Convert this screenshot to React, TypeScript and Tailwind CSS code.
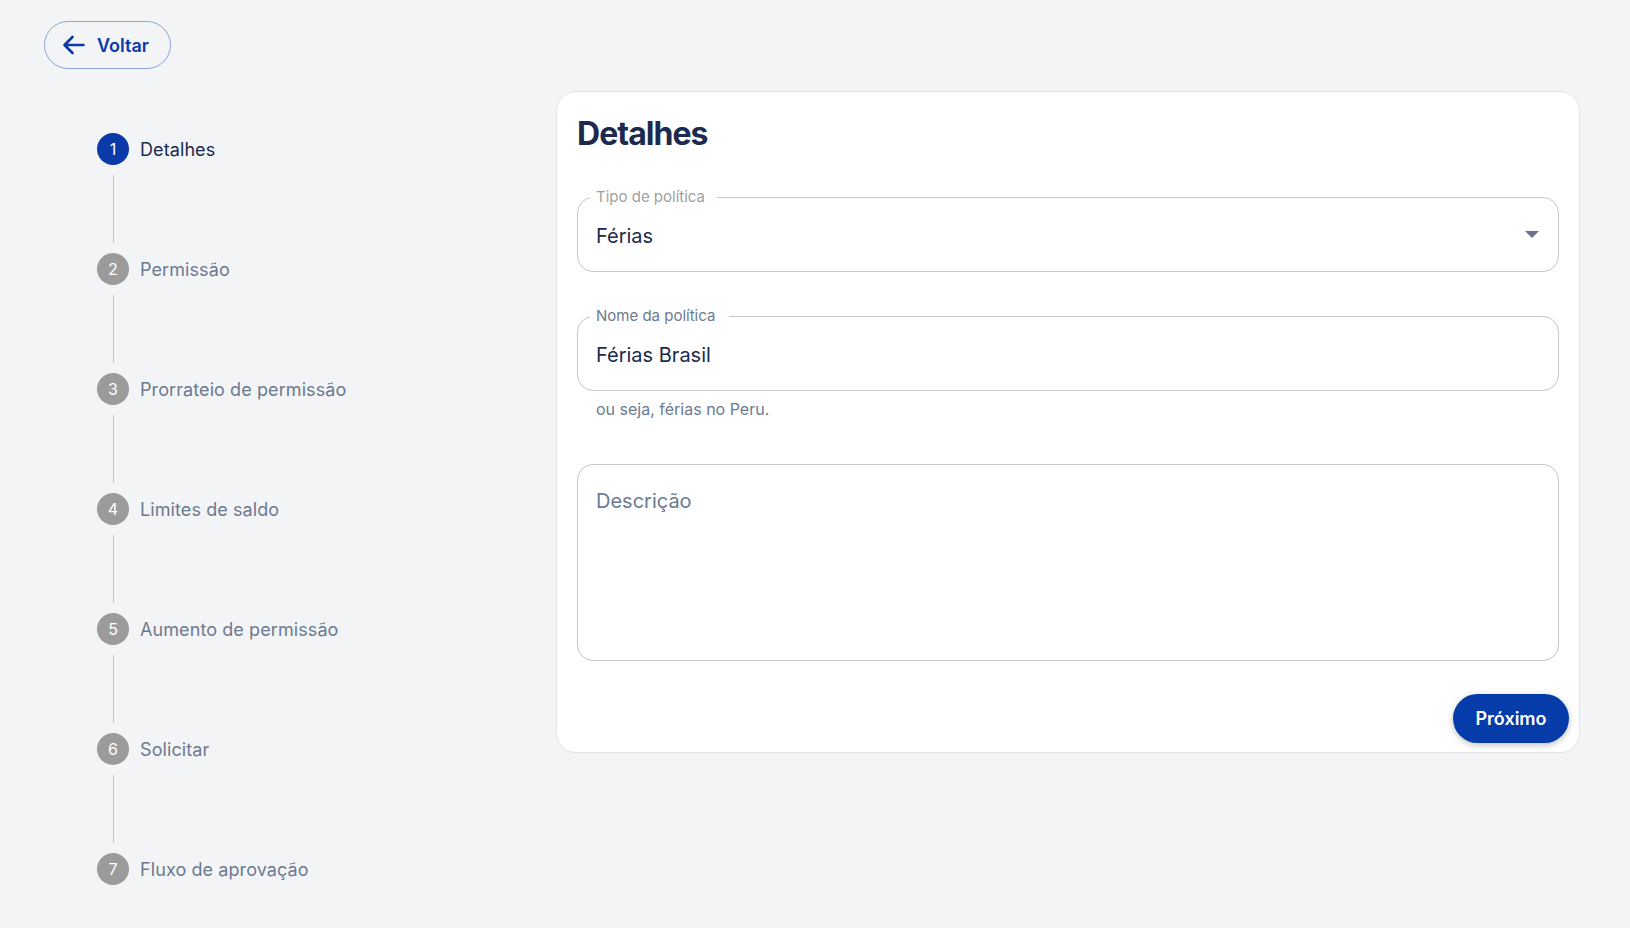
const steps = [
  "Detalhes",
  "Permissão",
  "Prorrateio de permissão",
  "Limites de saldo",
  "Aumento de permissão",
  "Solicitar",
  "Fluxo de aprovação",
];

function Stepper() {
  return (
    <div className="flex flex-col pl-[53px] pt-[42px]">
      {steps.map((label, i) => {
        const active = i === 0;
        return (
          <div key={label} className="flex flex-col">
            <div className="flex items-center gap-[11px]">
              <div
                className={
                  active
                    ? "w-8 h-8 rounded-full bg-[#0a3aa8] text-white text-[16px] flex items-center justify-center"
                    : "w-8 h-8 rounded-full bg-[#9b9b9b] text-white text-[16px] flex items-center justify-center"
                }
              >
                {i + 1}
              </div>
              <span
                className={
                  active
                    ? "text-[18px] tracking-[0.005em] text-[#1b2a4e]"
                    : "text-[18px] tracking-[0.005em] text-[#6c7a91]"
                }
              >
                {label}
              </span>
            </div>
            {i < steps.length - 1 && (
              <div className="ml-[16px] my-[10px] h-[68px] w-px bg-[#c4c4c4]" />
            )}
          </div>
        );
      })}
    </div>
  );
}

export default function App() {
  return (
    <div
      className="min-h-screen bg-[#f3f4f6] px-[44px] pt-[21px] pr-[50px]"
      style={{ fontFamily: "Inter, 'Noto Sans', sans-serif" }}
    >
      <button className="h-12 w-[127px] rounded-full border border-[#8aa4dc] flex items-center gap-[12px] pl-[17px] text-[#0a3aa8] text-[18px] font-semibold">
        <svg width="23" height="20" viewBox="0 0 23 20" fill="none">
          <path
            d="M21.5 10 H2.5 M10.5 2 L2.5 10 L10.5 18"
            stroke="currentColor"
            strokeWidth="2.6"
            strokeLinecap="round"
            strokeLinejoin="round"
          />
        </svg>
        Voltar
      </button>

      <div className="flex items-start mt-[22px]">
        <div className="w-[512px] shrink-0">
          <Stepper />
        </div>

        <div className="flex-1 bg-white border border-[#e2e3e6] rounded-[20px] pl-[20px] pr-[20px] pt-[22px] pb-[9px] flex flex-col">
          <h1 className="text-[32px] leading-[40px] font-bold tracking-[-0.03em] text-[#1b2a4e]">Detalhes</h1>

          <div className="relative mt-[43px] h-[75px] border border-[#c6c6c6] rounded-[16px] flex items-center justify-between pl-[18px] pr-[18px] pt-[3px]">
            <span className="absolute -top-[11px] left-[12px] bg-white pl-[6px] pr-[12px] text-[15px] leading-[20px] text-[#a0a0a0]">
              Tipo de política
            </span>
            <span className="text-[20px] text-[#1b2a4e]">Férias</span>
            <svg width="14" height="8" viewBox="0 0 14 8" className="mr-[1px] -mt-[3px]">
              <path d="M0 0 L14 0 L7 7 Z" fill="#6b7489" />
            </svg>
          </div>

          <div className="relative mt-[44px] h-[75px] border border-[#c6c6c6] rounded-[16px] flex items-center pl-[18px] pr-[18px] pt-[3px]">
            <span className="absolute -top-[11px] left-[12px] bg-white pl-[6px] pr-[14px] text-[15px] leading-[20px] text-[#6c7a91]">
              Nome da política
            </span>
            <span className="text-[20px] text-[#1b2a4e]">Férias Brasil</span>
          </div>
          <p className="mt-[8px] pl-[19px] text-[16px] leading-[20px] text-[#6c7a91]">ou seja, férias no Peru.</p>

          <div className="mt-[45px] h-[197px] border border-[#c6c6c6] rounded-[16px] pl-[18px] pt-[22px]">
            <span className="text-[20px] leading-[28px] text-[#6c7a91]">Descrição</span>
          </div>

          <div className="flex justify-end mt-[33px] -mr-[10px]">
            <button className="h-[49px] w-[116px] rounded-full bg-[#063ca9] text-white text-[18px] font-semibold shadow-[0_2px_6px_rgba(0,0,0,0.25)]">
              Próximo
            </button>
          </div>
        </div>
      </div>
    </div>
  );
}
